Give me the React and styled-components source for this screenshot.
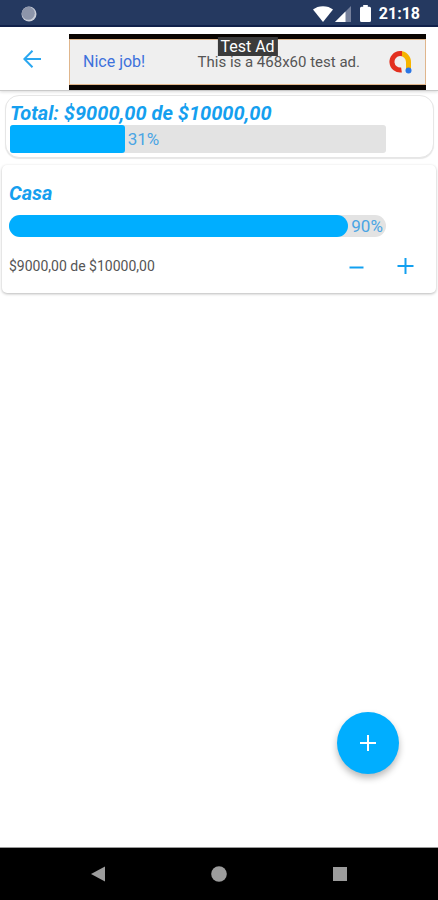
import React from "react";
import styled, { createGlobalStyle } from "styled-components";

const goals = [
  { name: "Casa", saved: "$9000,00", target: "$10000,00", percent: 90 },
];

const ProgressBar = ({ label, value, rounded }) => (
  <Track
    $rounded={rounded}
    role="progressbar"
    aria-label={label}
    aria-valuenow={Math.round(value)}
    aria-valuemin={0}
    aria-valuemax={100}
  >
    <Fill $rounded={rounded} style={{ width: `${value}%` }} />
    <Percent>{Math.round(value)}%</Percent>
  </Track>
);

const StatusBar = () => (
  <Status>
    <svg width="16" height="16" viewBox="0 0 16 16" aria-hidden="true">
      <circle cx="8" cy="8" r="7.5" fill="#c9cdd8" />
      <circle cx="7.3" cy="7.3" r="6.5" fill="#8d95aa" />
    </svg>
    <StatusIcons>
      <svg width="20" height="16" viewBox="0 0 20 16" aria-hidden="true">
        <path d="M0 3.6C2.7 1.4 6 .2 10 .2s7.300 1.200 10 3.400L10 16z" fill="#fff" />
      </svg>
      <svg width="16" height="16" viewBox="0 0 16 16" aria-hidden="true">
        <path d="M16 0v16H0z" fill="#75809b" />
        <path d="M10.500 5.500V16H0z" fill="#fff" />
      </svg>
      <Battery width="11" height="17" viewBox="0 0 11 17" aria-hidden="true">
        <path
          d="M3.200 0h4.600v1.800h1.700A1.500 1.500 0 0 1 11 3.300v12.200A1.500 1.500 0 0 1 9.500 17h-8A1.500 1.500 0 0 1 0 15.500V3.300a1.500 1.500 0 0 1 1.500-1.500h1.700z"
          fill="#fff"
        />
      </Battery>
      <Clock>21:18</Clock>
    </StatusIcons>
  </Status>
);

const AdBanner = () => (
  <Ad href="#ad">
    <AdTag>Test Ad</AdTag>
    <AdTitle>Nice job!</AdTitle>
    <AdText>This is a 468x60 test ad.</AdText>
    <svg width="24" height="24" viewBox="0 0 24 24" fill="none" aria-hidden="true">
      <path d="M12 3.500a8.500 8.500 0 0 1 8.500 8.500v7" stroke="#f6b400" strokeWidth="5" />
      <path d="M14 3.500H12A8.300 8.300 0 1 0 13.500 20" stroke="#e3301f" strokeWidth="5" />
      <circle cx="20.500" cy="20.500" r="3" fill="#2a76e5" />
    </svg>
  </Ad>
);

const Goal = ({ goal }) => (
  <GoalCard>
    <Title as="h2">{goal.name}</Title>
    <ProgressBar label={goal.name} value={goal.percent} rounded />
    <GoalFooter>
      <Amount>
        {goal.saved} de {goal.target}
      </Amount>
      <Actions>
        <IconButton type="button" aria-label="Retirar">
          <svg width="17" height="17" viewBox="0 0 17 17" aria-hidden="true">
            <path d="M1.500 9.500h14" stroke="#12a0f0" strokeWidth="2" />
          </svg>
        </IconButton>
        <IconButton type="button" aria-label="Depositar">
          <svg width="17" height="17" viewBox="0 0 17 17" aria-hidden="true">
            <path d="M.5 8h16M8.500 0v16" stroke="#12a0f0" strokeWidth="2" />
          </svg>
        </IconButton>
      </Actions>
    </GoalFooter>
  </GoalCard>
);

const App = () => {
  return (
    <Screen>
      <GlobalStyle />
      <StatusBar />
      <AppBar>
        <BackButton type="button" aria-label="Volver">
          <svg width="18" height="18" viewBox="0 0 18 18" fill="none" aria-hidden="true">
            <path d="M18 9H1.500M9.500 .8L1.300 9l8.200 8.200" stroke="#2aa7f0" strokeWidth="2" />
          </svg>
        </BackButton>
        <AdBanner />
      </AppBar>
      <Content>
        <TotalCard>
          <Title>Total: $9000,00 de $10000,00</Title>
          <ProgressBar label="Total" value={30.5} />
        </TotalCard>
        {goals.map((goal) => (
          <Goal key={goal.name} goal={goal} />
        ))}
        <AddButton type="button" aria-label="Agregar">
          <svg width="18" height="18" viewBox="0 0 18 18" aria-hidden="true">
            <path d="M1 9h16M9 1v16" stroke="#fff" strokeWidth="2" />
          </svg>
        </AddButton>
      </Content>
      <NavBar>
        <NavButton type="button" aria-label="Atrás">
          <svg width="16" height="16" viewBox="0 0 16 16" aria-hidden="true">
            <path d="M1 8L15 .5v15z" fill="#9c9c9c" />
          </svg>
        </NavButton>
        <NavButton type="button" aria-label="Inicio">
          <svg width="16" height="16" viewBox="0 0 16 16" aria-hidden="true">
            <circle cx="8" cy="8" r="7.800" fill="#9c9c9c" />
          </svg>
        </NavButton>
        <NavButton type="button" aria-label="Recientes">
          <svg width="16" height="16" viewBox="0 0 16 16" aria-hidden="true">
            <path d="M1 1h14v14H1z" fill="#9c9c9c" />
          </svg>
        </NavButton>
      </NavBar>
    </Screen>
  );
};

const GlobalStyle = createGlobalStyle`
  * {
    box-sizing: border-box;
  }
  body {
    margin: 0;
    background: #fff;
    font-family: Roboto, "Liberation Sans", sans-serif;
  }
  h1,
  h2,
  p {
    margin: 0;
  }
  button {
    display: grid;
    place-items: center;
    padding: 0;
    border: none;
    background: none;
    cursor: pointer;
  }
  svg {
    display: block;
    flex: none;
  }
`;

const Screen = styled.div`
  display: flex;
  flex-direction: column;
  min-height: 100vh;
`;

const Status = styled.header`
  display: flex;
  align-items: center;
  justify-content: space-between;
  height: 27px;
  padding: 2px 18px 0 21px;
  background: #253960;
  border-bottom: 2px solid #12224c;
`;

const StatusIcons = styled.div`
  display: flex;
  align-items: center;
  gap: 2px;
`;

const Battery = styled.svg`
  margin: 0 6px 0 7px;
`;

const Clock = styled.span`
  color: #fff;
  font-size: 16px;
  font-weight: 700;
  line-height: 20px;
`;

const AppBar = styled.div`
  display: flex;
  align-items: flex-end;
  height: 64px;
  padding-right: 12px;
  background: #fff;
  border-bottom: 1px solid #c9c9c9;
  box-shadow: 0 1px 3px rgba(0, 0, 0, 0.15);
`;

const BackButton = styled.button`
  flex: none;
  width: 69px;
  height: 63px;
  padding-right: 5px;
`;

const Ad = styled.a`
  position: relative;
  flex: 1;
  display: flex;
  align-items: center;
  height: 56px;
  padding: 0 14px;
  background: #efefef;
  box-shadow: inset 0 5px #0a0502, inset 0 -5px #0a0502, inset 0 6px #e0b68c,
    inset 0 -6px #e0b68c, inset 1px 0 #e0b68c, inset -1px 0 #e0b68c;
  text-decoration: none;
`;

/* sits on the top edge of the banner, over its text */
const AdTag = styled.span`
  position: absolute;
  top: 3px;
  left: 50%;
  transform: translateX(-50%);
  padding: 0 3px;
  background: #3b3b3b;
  color: #fff;
  font-size: 16px;
  line-height: 19px;
  white-space: nowrap;
`;

const AdTitle = styled.span`
  color: #3d71dc;
  font-size: 16px;
  line-height: 20px;
`;

const AdText = styled.span`
  flex: 1;
  padding-right: 28px;
  color: #555;
  font-size: 15px;
  line-height: 20px;
  text-align: right;
  white-space: nowrap;
`;

const Content = styled.main`
  position: relative;
  flex: 1;
  padding: 4px 2px;
`;

const TotalCard = styled.section`
  margin: 0 2px 7px 3px;
  padding: 5px 47px 4px 4px;
  background: #fff;
  border: 1px solid #e6e6e6;
  border-radius: 14px;
  box-shadow: 0 1px 1px rgba(0, 0, 0, 0.1);
`;

const Title = styled.h1`
  color: #159fef;
  font-size: 20px;
  font-style: italic;
  font-weight: 700;
  line-height: 24px;
`;

const Track = styled.div`
  display: flex;
  align-items: center;
  gap: 3px;
  height: ${(props) => (props.$rounded ? "22px" : "28px")};
  border-radius: ${(props) => (props.$rounded ? "11px" : "3px")};
  background: #e3e3e3;
`;

const Fill = styled.div`
  flex: none;
  height: 100%;
  border-radius: ${(props) => (props.$rounded ? "11px" : "3px")};
  background: #00aeff;
`;

const Percent = styled.span`
  color: #4aa5e4;
  font-size: 17px;
  line-height: 20px;
`;

const GoalCard = styled.article`
  padding: 16px 50px 5px 7px;
  background: #fff;
  border-radius: 5px;
  box-shadow: 0 1px 3px rgba(0, 0, 0, 0.28);

  h2 {
    margin-bottom: 10px;
  }
`;

const GoalFooter = styled.div`
  display: flex;
  align-items: center;
  justify-content: space-between;
  height: 44px;
  margin: 7px -44px 0 0;
`;

const Amount = styled.p`
  color: #555;
  font-size: 14px;
  line-height: 16px;
`;

const Actions = styled.div`
  display: flex;
`;

const IconButton = styled.button`
  width: 49px;
  height: 44px;
`;

const AddButton = styled.button`
  position: absolute;
  right: 39px;
  bottom: 73px;
  width: 62px;
  height: 62px;
  border-radius: 50%;
  background: #00aeff;
  box-shadow: 0 4px 7px rgba(0, 0, 0, 0.28);
`;

const NavBar = styled.nav`
  display: flex;
  justify-content: center;
  height: 53px;
  background: #000;
  border-top: 1px solid #999;
`;

const NavButton = styled.button`
  width: 121px;
  height: 52px;
`;

export default App;
